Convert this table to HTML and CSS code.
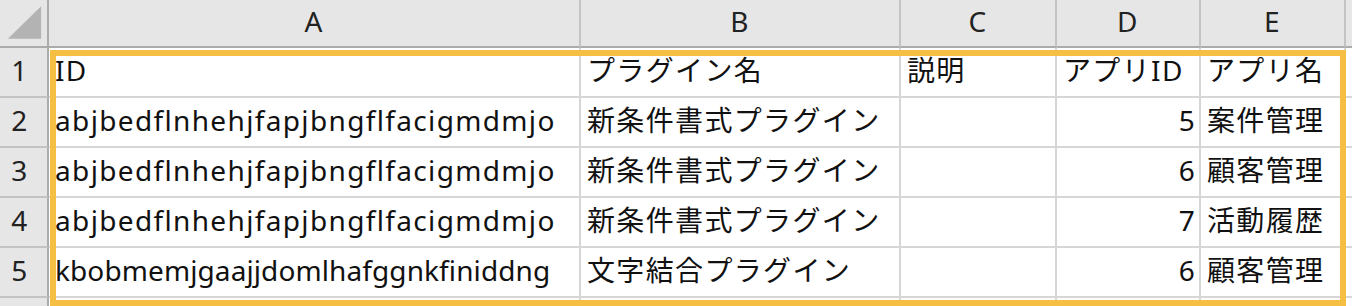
FILE: index.html
```html
<!DOCTYPE html>
<html lang="ja">
<head>
<meta charset="utf-8">
<title>Sheet</title>
<link rel="stylesheet" href="styles.css">
</head>
<body>
<div class="sheet">
  <div class="corner"><svg class="tri" width="48" height="46" viewBox="0 0 48 46"><polygon points="8,39 42,39 42,6" fill="#b3b3b3"/></svg></div>
  <div class="colhdr">A</div>
  <div class="colhdr">B</div>
  <div class="colhdr">C</div>
  <div class="colhdr">D</div>
  <div class="colhdr">E</div>
  <div class="colhdr fill"></div>

  <div class="rowhdr">1</div>
  <div class="cell">ID</div>
  <div class="cell">プラグイン名</div>
  <div class="cell">説明</div>
  <div class="cell">アプリID</div>
  <div class="cell">アプリ名</div>
  <div class="cell fill"></div>

  <div class="rowhdr">2</div>
  <div class="cell">abjbedflnhehjfapjbngflfacigmdmjo</div>
  <div class="cell">新条件書式プラグイン</div>
  <div class="cell"></div>
  <div class="cell num">5</div>
  <div class="cell">案件管理</div>
  <div class="cell fill"></div>

  <div class="rowhdr">3</div>
  <div class="cell">abjbedflnhehjfapjbngflfacigmdmjo</div>
  <div class="cell">新条件書式プラグイン</div>
  <div class="cell"></div>
  <div class="cell num">6</div>
  <div class="cell">顧客管理</div>
  <div class="cell fill"></div>

  <div class="rowhdr">4</div>
  <div class="cell">abjbedflnhehjfapjbngflfacigmdmjo</div>
  <div class="cell">新条件書式プラグイン</div>
  <div class="cell"></div>
  <div class="cell num">7</div>
  <div class="cell">活動履歴</div>
  <div class="cell fill"></div>

  <div class="rowhdr">5</div>
  <div class="cell tight">kbobmemjgaajjdomlhafggnkfiniddng</div>
  <div class="cell">文字結合プラグイン</div>
  <div class="cell"></div>
  <div class="cell num">6</div>
  <div class="cell">顧客管理</div>
  <div class="cell fill"></div>

  <div class="rowhdr last"></div>
  <div class="cell last"></div>
  <div class="cell last"></div>
  <div class="cell last"></div>
  <div class="cell last"></div>
  <div class="cell last"></div>
  <div class="cell last fill"></div>

  <div class="selection"></div>
</div>
</body>
</html>
```

FILE: styles.css
```css
html, body {
  margin: 0;
  padding: 0;
  background: #ffffff;
  overflow: hidden;
}

.sheet {
  position: relative;
  width: 1352px;
  height: 306px;
  display: grid;
  grid-template-columns: 49px 532px 320px 156px 144px 145px 1fr;
  grid-template-rows: 48px repeat(5, 50px) 1fr;
  font-family: "Noto Sans", "Noto Sans CJK JP", sans-serif;
  font-size: 28px;
  line-height: 28px;
  letter-spacing: 1.35px;
  color: #111111;
}

.sheet > div {
  box-sizing: border-box;
  display: flex;
  align-items: flex-end;
  white-space: nowrap;
  overflow: hidden;
}

.corner {
  background: #e6e6e6;
  border-right: 2px solid #ababab;
  border-bottom: 2px solid #ababab;
  align-items: flex-start !important;
}

.tri {
  display: block;
}

.colhdr {
  background: #e6e6e6;
  border-right: 2px solid #c3c3c3;
  border-bottom: 2px solid #ababab;
  justify-content: center;
  padding-bottom: 11px;
  color: #222222;
}

.colhdr.fill {
  border-right: none;
}

.rowhdr {
  background: #e6e6e6;
  border-right: 2px solid #ababab;
  border-bottom: 2px solid #c3c3c3;
  justify-content: center;
  padding-right: 7px;
  padding-bottom: 12px;
  color: #222222;
}

.cell {
  background: #ffffff;
  border-right: 2px solid #d6d6d6;
  border-bottom: 2px solid #d6d6d6;
  padding-left: 6px;
  padding-bottom: 12px;
}

.cell.tight {
  letter-spacing: 0.1px;
}

.cell.fill {
  border-right: none;
}

.cell.num {
  justify-content: flex-end;
  padding-left: 0;
  padding-right: 3px;
}

.last {
  border-bottom: none !important;
}

.selection {
  position: absolute;
  left: 50px;
  top: 50px;
  width: 1296px;
  height: 256px;
  border: 6px solid #f4bf42;
  pointer-events: none;
}
```
